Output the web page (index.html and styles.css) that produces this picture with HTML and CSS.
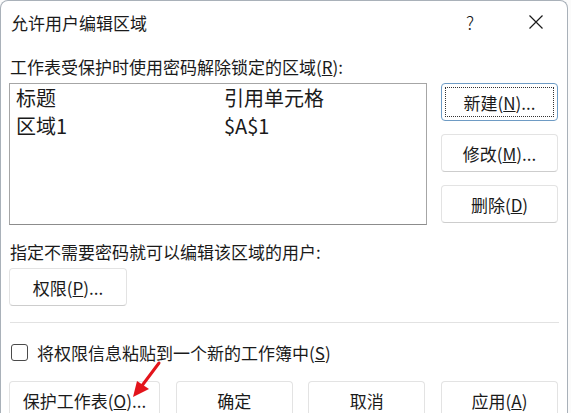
FILE: index.html
```html
<!DOCTYPE html>
<html lang="zh-CN">
<head>
    <meta charset="UTF-8">
    <title>允许用户编辑区域</title>
    <link rel="stylesheet" href="styles.css">
</head>
<body>
    <div class="dialog">
        <!-- 标题栏 -->
        <div class="titlebar">
            <span class="title">允许用户编辑区域</span>
            <span class="help">?</span>
            <span class="close">
                <svg width="16" height="16" viewBox="0 0 16 16">
                    <path d="M1.5 1.5 L14.5 14.5 M14.5 1.5 L1.5 14.5" stroke="#1a1a1a" stroke-width="1.2" fill="none"/>
                </svg>
            </span>
        </div>

        <div class="content">
            <div class="label">工作表受保护时使用密码解除锁定的区域(<u>R</u>):</div>
            <div class="ranges">
                <div class="range-list">
                    <div class="range-row">
                        <span>标题</span>
                        <span>引用单元格</span>
                    </div>
                    <div class="range-row">
                        <span>区域1</span>
                        <span>$A$1</span>
                    </div>
                </div>
                <div class="side-buttons">
                    <button class="btn focused">新建(<u>N</u>)...</button>
                    <button class="btn">修改(<u>M</u>)...</button>
                    <button class="btn">删除(<u>D</u>)</button>
                </div>
            </div>

            <div class="label second">指定不需要密码就可以编辑该区域的用户:</div>
            <button class="btn perm">权限(<u>P</u>)...</button>

            <div class="separator"></div>

            <label class="check-row">
                <span class="checkbox"></span>
                <span>将权限信息粘贴到一个新的工作簿中(<u>S</u>)</span>
            </label>

            <div class="bottom-buttons">
                <button class="btn wide">保护工作表(<u>O</u>)...</button>
                <button class="btn">确定</button>
                <button class="btn">取消</button>
                <button class="btn">应用(<u>A</u>)</button>
            </div>
        </div>

        <!-- 红色箭头标注 -->
        <svg class="arrow" width="60" height="60" viewBox="0 0 60 60">
            <line x1="40" y1="6" x2="22" y2="30" stroke="#e3141b" stroke-width="3" stroke-linecap="round"/>
            <polygon points="14,40 18,24 30,32" fill="#e3141b"/>
        </svg>
    </div>
</body>
</html>
```

FILE: styles.css
```css
body {
    margin: 0;
    background: #fbfbfb;
    font-family: "Noto Sans CJK SC", "Noto Sans", sans-serif;
    color: #1a1a1a;
}
.dialog {
    position: relative;
    width: 566px;
    height: 412px;
    background: #fff;
    border: 1px solid #a9b1b9;
    border-bottom: none;
    border-radius: 8px 8px 0 0;
    overflow: hidden;
}
.titlebar {
    display: flex;
    align-items: center;
    height: 42px;
    padding-left: 10px;
}
.title {
    font-size: 17px;
    flex: 1;
}
.help {
    font-size: 18px;
    font-weight: 300;
    width: 20px;
    text-align: center;
    margin-right: 48px;
}
.close {
    display: flex;
    width: 16px;
    height: 16px;
    margin-right: 23px;
}
.content {
    padding: 0 8px 0 8px;
    font-size: 17px;
}
.label {
    margin-top: 12px;
    line-height: 24px;
    padding-left: 1px;
}
.label.second {
    margin-top: 15px;
}
.ranges {
    display: flex;
    gap: 14px;
    margin-top: 4px;
}
.range-list {
    width: 416px;
    height: 140px;
    border: 1px solid #a6a6a6;
    border-bottom-color: #8c8c8c;
}
.range-row {
    display: grid;
    grid-template-columns: 208px 1fr;
    padding-left: 6px;
    height: 28px;
    line-height: 28px;
    font-size: 20px;
}
.side-buttons {
    display: flex;
    flex-direction: column;
    gap: 13px;
}
.btn {
    position: relative;
    width: 117px;
    height: 38px;
    padding: 0;
    background: #fff;
    border: 1px solid #e3e3e3;
    border-bottom-color: #cdcdcd;
    border-radius: 4px;
    font-family: inherit;
    font-size: 17px;
    color: #1a1a1a;
}
.btn.focused {
    border: 1px solid #6e9bc4;
}
.btn.focused::after {
    content: "";
    position: absolute;
    top: 3px;
    left: 3px;
    right: 3px;
    bottom: 3px;
    border: 1px dotted #333;
}
.btn.perm {
    display: block;
    width: 118px;
    margin-top: 4px;
}
.btn.wide {
    width: 151px;
}
.separator {
    height: 1px;
    background: #e2e2e2;
    margin: 16px 0 0 1px;
}
.check-row {
    display: flex;
    align-items: center;
    gap: 9px;
    margin-top: 19px;
    height: 20px;
    padding-left: 2px;
}
.checkbox {
    width: 15px;
    height: 15px;
    border: 1px solid #4a4a4a;
    border-radius: 3px;
}
.bottom-buttons {
    display: flex;
    justify-content: space-between;
    margin-top: 19px;
    width: 549px;
}
.arrow {
    position: absolute;
    left: 118px;
    top: 356px;
}
```
